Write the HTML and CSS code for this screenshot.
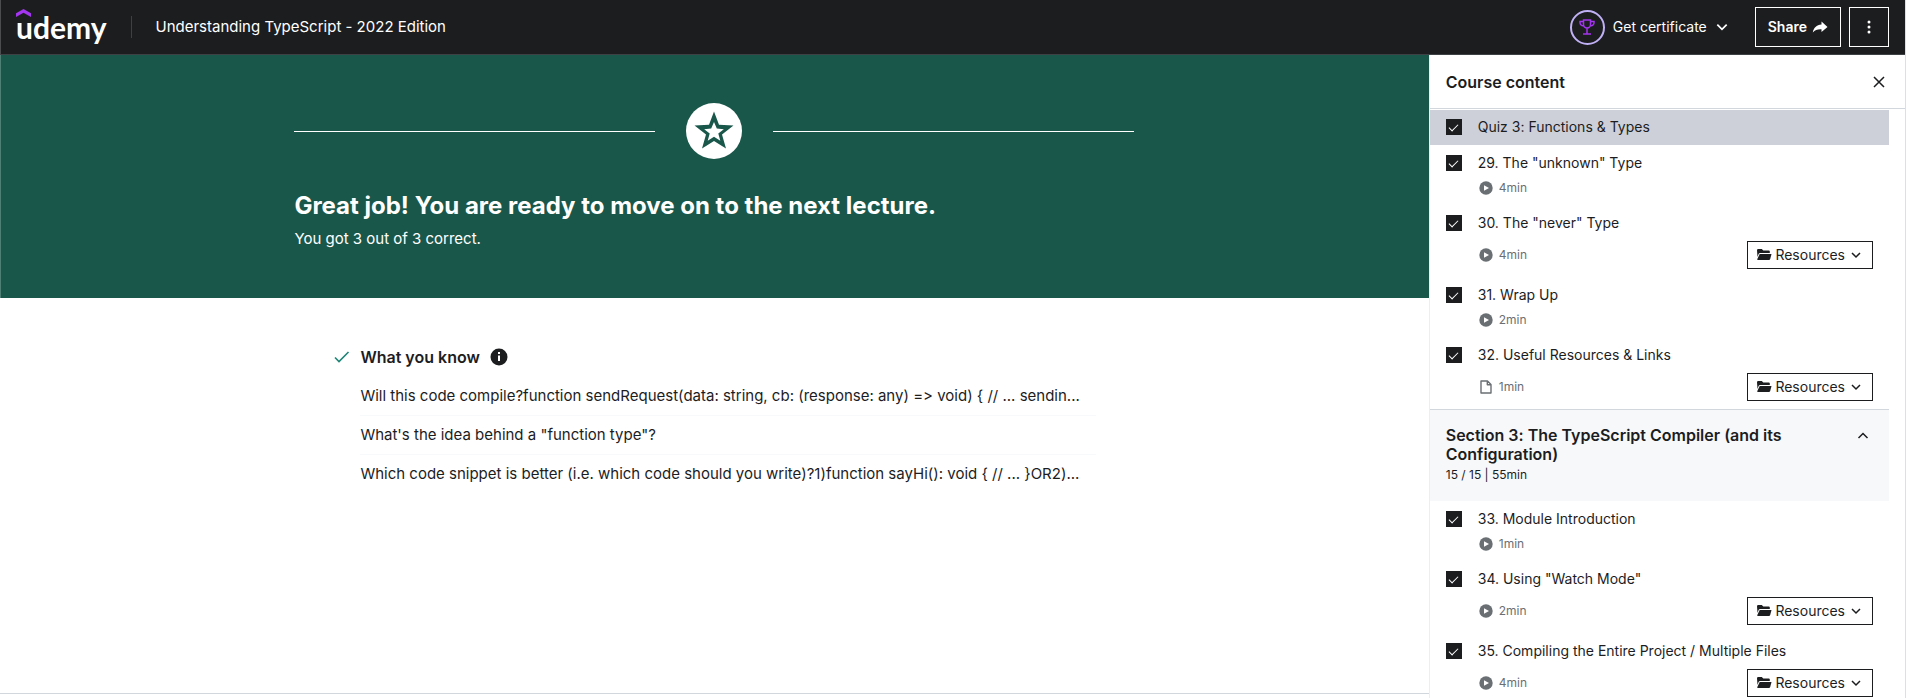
FILE: index.html
```html
<!DOCTYPE html>
<html lang="en">
<head>
<meta charset="utf-8">
<meta name="viewport" content="width=device-width, initial-scale=1">
<title>Understanding TypeScript - 2022 Edition | Udemy</title>
<link rel="stylesheet" href="styles.css">
</head>
<body>
<svg class="sprite" aria-hidden="true">
  <symbol id="chevron-down" viewBox="0 0 12 12"><path d="M2 4l4 4 4-4" fill="none" stroke="currentColor" stroke-width="1.5"/></symbol>
  <symbol id="play" viewBox="0 0 14 14"><circle cx="7" cy="7" r="6.7" fill="currentColor"/><path d="M5 4.3v5.4L10 7z" fill="#fff"/></symbol>
  <symbol id="file" viewBox="0 0 14 14"><path d="M2 1h6.500L12 4.500V13H2z M8.300 1v3.700H12" fill="none" stroke="currentColor" stroke-width="1.400" stroke-linejoin="round"/></symbol>
  <symbol id="folder" viewBox="0 0 16 14"><path d="M1 2.200Q1 1 2.200 1h3.600l1.500 1.600h5.500q1 0 1 1V5H4.200Q3 5 2.600 6L1.500 9z" fill="currentColor"/><path d="M3.700 6H15.500l-1.300 5q-.3 1-1.300 1H2q-1 0-.8-.8z" fill="currentColor"/></symbol>
</svg>

<div class="page">
  <header class="topbar">
    <a class="logo" href="#" aria-label="Udemy">
      <svg class="logo-hat" viewBox="0 0 15 8" aria-hidden="true"><path d="M0 4.200L7.500 0 15 4.200V8L7.500 3.800 0 8z" fill="#a435f0"/></svg>
      <span class="logo-word">udemy</span>
    </a>
    <a class="course-title" href="#">Understanding TypeScript - 2022 Edition</a>
    <button class="certificate" type="button">
      <span class="ring">
        <svg viewBox="0 0 16 16" width="16" height="16" aria-hidden="true"><path d="M4.500 1h7v4.500a3.500 3.500 0 0 1-7 0zM4.500 2.500H1v1.200a3 3 0 0 0 3.500 3M11.500 2.500H15v1.200a3 3 0 0 1-3.500 3M8 9v5.500M4 15h8" fill="none" stroke="#a435f0" stroke-width="1.500"/></svg>
      </span>
      <span class="certificate-label">Get certificate</span>
      <svg class="chevron-lg" aria-hidden="true"><use href="#chevron-down"/></svg>
    </button>
    <button class="outline share" type="button">Share
      <svg viewBox="0 0 16 14" width="16" height="14" aria-hidden="true"><path d="M9.500 1.500L15.500 7l-6 5V9.200C5.500 9 3 10 .8 12.500 1.500 8 4.500 4.700 9.500 4.500z" fill="#fff"/></svg>
    </button>
    <button class="outline more" type="button" aria-label="More options">
      <svg viewBox="0 0 4 14" width="4" height="14" aria-hidden="true"><g fill="#fff"><circle cx="2" cy="2" r="1.500"/><circle cx="2" cy="7" r="1.500"/><circle cx="2" cy="12" r="1.500"/></g></svg>
    </button>
  </header>

  <div class="body">
    <main class="quiz">
      <section class="banner">
        <div class="banner-inner">
          <div class="star-row">
            <svg viewBox="0 0 56 56" width="56" height="56" aria-hidden="true"><circle cx="28" cy="28" r="28" fill="#fff"/><path fill="#1a574b" fill-rule="evenodd" d="M28 8.500l5 13.200 14.500.8-11.500 9 4 14L28 38l-12 7.500 4-14-11.500-9 14.500-.8zM28 19l-2.800 6.500-7 .7 5.500 4.300-2 7.200 6.300-3.900 6.300 3.900-2-7.200 5.500-4.300-7-.7z"/></svg>
          </div>
          <h1>Great job! You are ready to move on to the next lecture.</h1>
          <p>You got 3 out of 3 correct.</p>
        </div>
      </section>
      <section class="results">
        <h2>
          <svg class="tick" viewBox="0 0 16 12" width="16" height="12" aria-hidden="true"><path d="M1 6.500L5 10.500 14.500 1" fill="none" stroke="#1e8577" stroke-width="1.600"/></svg>
          What you know
          <svg class="info" viewBox="0 0 18 18" width="18" height="18" aria-hidden="true"><circle cx="9" cy="9" r="8.500" fill="#1c1d1f"/><path d="M8 4h2v2H8zM8 7.500h2V13H8z" fill="#fff"/></svg>
        </h2>
        <ul>
          <li>Will this code compile?function sendRequest(data: string, cb: (response: any) =&gt; void) { // ... sendin...</li>
          <li>What's the idea behind a "function type"?</li>
          <li>Which code snippet is better (i.e. which code should you write)?1)function sayHi(): void { // ... }OR2)...</li>
        </ul>
      </section>
      <footer class="quiz-footer"></footer>
    </main>

    <aside class="sidebar">
      <div class="sidebar-head">
        <h2>Course content</h2>
        <button class="close" type="button" aria-label="Close">
          <svg viewBox="0 0 12 12" width="12" height="12" aria-hidden="true"><path d="M1 1l10 10M11 1L1 11" stroke="#1c1d1f" stroke-width="1.500"/></svg>
        </button>
      </div>
      <div class="sidebar-list">
        <ul>
          <li class="item item-active">
            <input type="checkbox" id="q3" checked><div><label for="q3">Quiz 3: Functions &amp; Types</label></div>
          </li>
          <li class="item">
            <input type="checkbox" id="l29" checked><div><label for="l29">29. The "unknown" Type</label>
            <div class="meta"><svg><use href="#play"/></svg><span>4min</span></div></div>
          </li>
          <li class="item">
            <input type="checkbox" id="l30" checked><div><label for="l30">30. The "never" Type</label>
            <div class="meta meta-res"><svg><use href="#play"/></svg><span>4min</span><button class="resources" type="button"><svg class="folder"><use href="#folder"/></svg>Resources<svg class="chevron"><use href="#chevron-down"/></svg></button></div></div>
          </li>
          <li class="item">
            <input type="checkbox" id="l31" checked><div><label for="l31">31. Wrap Up</label>
            <div class="meta"><svg><use href="#play"/></svg><span>2min</span></div></div>
          </li>
          <li class="item">
            <input type="checkbox" id="l32" checked><div><label for="l32">32. Useful Resources &amp; Links</label>
            <div class="meta meta-res"><svg><use href="#file"/></svg><span>1min</span><button class="resources" type="button"><svg class="folder"><use href="#folder"/></svg>Resources<svg class="chevron"><use href="#chevron-down"/></svg></button></div></div>
          </li>
        </ul>
        <button class="section" type="button">
          <span class="section-title">Section 3: The TypeScript Compiler (and its Configuration)</span>
          <svg class="section-arrow" viewBox="0 0 12 12" aria-hidden="true"><path d="M1.500 8L6 3.500 10.500 8" fill="none" stroke="currentColor" stroke-width="1.500"/></svg>
          <span class="section-meta">15 / 15 | 55min</span>
        </button>
        <ul>
          <li class="item">
            <input type="checkbox" id="l33" checked><div><label for="l33">33. Module Introduction</label>
            <div class="meta"><svg><use href="#play"/></svg><span>1min</span></div></div>
          </li>
          <li class="item">
            <input type="checkbox" id="l34" checked><div><label for="l34">34. Using "Watch Mode"</label>
            <div class="meta meta-res"><svg><use href="#play"/></svg><span>2min</span><button class="resources" type="button"><svg class="folder"><use href="#folder"/></svg>Resources<svg class="chevron"><use href="#chevron-down"/></svg></button></div></div>
          </li>
          <li class="item">
            <input type="checkbox" id="l35" checked><div><label for="l35">35. Compiling the Entire Project / Multiple Files</label>
            <div class="meta meta-res"><svg><use href="#play"/></svg><span>4min</span><button class="resources" type="button"><svg class="folder"><use href="#folder"/></svg>Resources<svg class="chevron"><use href="#chevron-down"/></svg></button></div></div>
          </li>
        </ul>
      </div>
    </aside>
  </div>
</div>
</body>
</html>
```

FILE: styles.css
```css
* { box-sizing: border-box; }

body {
  margin: 0;
  background: #fff;
  color: #1c1d1f;
  font: 15px/22px Inter, Roboto, sans-serif;
  font-variant-ligatures: no-contextual;
}

h1, h2, p, ul { margin: 0; padding: 0; }
ul { list-style: none; }
a { color: inherit; text-decoration: none; }
button { font: inherit; color: inherit; background: none; border: 0; padding: 0; cursor: pointer; }
svg { flex: none; display: block; }
.sprite { position: absolute; width: 0; height: 0; }

.page {
  display: flex;
  flex-direction: column;
  height: 100vh;
  overflow: hidden;
  border-right: 1px solid #dcdfe4;
}

/* Top bar */
.topbar {
  display: flex;
  align-items: center;
  flex: none;
  height: 55px;
  padding: 0 16px 0 15px;
  background: #1c1d1f;
  color: #fff;
  border-bottom: 1px solid #3e4143;
  border-left: 1px solid #4a4c4e;
}

.logo { display: flex; flex-direction: column; padding-bottom: 8px; }
.logo-hat { width: 15px; height: 8px; }
.logo-word { font: 700 30px/20px Lato, sans-serif; }

.course-title {
  margin: 0 auto 0 24px;
  padding: 0 0 0 24px;
  border-left: 1px solid #3e4143;
}

.certificate { display: flex; align-items: center; gap: 8px; margin-right: 26px; font-size: 14px; }
.ring {
  display: grid;
  place-items: center;
  width: 35px;
  height: 35px;
  border: 2px solid #c0b0f5;
  border-radius: 50%;
}
.chevron-lg { width: 14px; height: 14px; }

.outline {
  display: flex;
  align-items: center;
  justify-content: center;
  gap: 5px;
  height: 40px;
  border: 1px solid #fff;
  font-size: 14px;
  font-weight: 600;
}
.share { padding: 0 12px; }
.more { width: 40px; margin-left: 8px; }

/* Page body */
.body { display: flex; flex: 1; min-height: 0; }
.quiz { display: flex; flex-direction: column; flex: 1; min-width: 0; }

.banner { padding: 48px 24px; background: #1a574b; color: #fff; box-shadow: inset 1px 0 #4f8075; }
.banner-inner { max-width: 840px; margin: 0 auto; }
.star-row { display: flex; align-items: center; gap: 31px; margin-bottom: 30px; }
.star-row::before, .star-row::after { content: ""; flex: 1; height: 1px; background: #fff; }
.banner h1 { font-size: 24px; line-height: 34px; font-weight: 700; margin-bottom: 5px; }

.results { width: 100%; max-width: 808px; margin: 0 auto; padding: 46px 22px 0 24px; flex: 1; }
.results h2 { display: flex; align-items: center; gap: 10px; font-size: 16px; font-weight: 600; line-height: 26px; margin-bottom: 7px; }
.results ul { padding-left: 26px; }
.results li {
  padding: 8px 0;
  border-bottom: 1px solid #f7f9fa;
  white-space: nowrap;
  overflow: hidden;
  text-overflow: ellipsis;
}
.results li:last-child { border-bottom: 0; }
.quiz-footer { height: 5px; border-top: 1px solid #d1d7dc; }

/* Course content */
.sidebar { display: flex; flex-direction: column; flex: none; width: 25%; border-left: 1px solid #eceef0; }
.sidebar-head {
  display: flex;
  align-items: center;
  justify-content: space-between;
  flex: none;
  height: 54px;
  padding: 0 20px 0 16px;
  border-bottom: 1px solid #d1d7dc;
}
.sidebar-head h2 { font-size: 16px; font-weight: 600; }
.sidebar-list { flex: 1; min-height: 0; overflow: hidden; padding-right: 16px; }

.item { display: flex; gap: 16px; padding: 8px 16px; font-size: 14px; line-height: 20px; }
.item > div { flex: 1; }
.item label { display: block; }
.item-active { background: #cdd0d8; box-shadow: inset 0 1px #fff; }

.item input {
  appearance: none;
  display: grid;
  place-items: center;
  flex: none;
  width: 16px;
  height: 16px;
  margin: 2px 0;
  background: #1c1d1f;
}
.item input::after {
  content: "";
  width: 8px;
  height: 4px;
  margin-bottom: 2px;
  border-left: 1px solid #fff;
  border-bottom: 1px solid #fff;
  transform: rotate(-45deg);
}

.meta { display: flex; align-items: center; gap: 5px; margin-top: 6px; font-size: 12px; line-height: 18px; color: #6a6f73; }
.meta > svg { width: 16px; height: 14px; }
.meta-res { margin-top: 8px; }

.resources {
  display: flex;
  align-items: center;
  gap: 3px;
  height: 28px;
  margin-left: auto;
  padding: 0 10px 0 8px;
  border: 1px solid #1c1d1f;
  font-size: 14px;
  color: #1c1d1f;
}
.folder { width: 16px; height: 14px; }
.chevron { width: 12px; height: 12px; margin-left: 2px; }

.section {
  display: grid;
  grid-template-columns: 1fr auto;
  width: 100%;
  padding: 16px 20px 15px 16px;
  column-gap: 48px;
  background: #f7f8fa;
  border-top: 1px solid #d1d7dc;
  text-align: left;
}
.section-title { font-size: 16px; font-weight: 600; line-height: 19px; }
.section-arrow { width: 12px; height: 12px; margin-top: 4px; }
.section-meta { font-size: 12px; line-height: 22px; }
```
